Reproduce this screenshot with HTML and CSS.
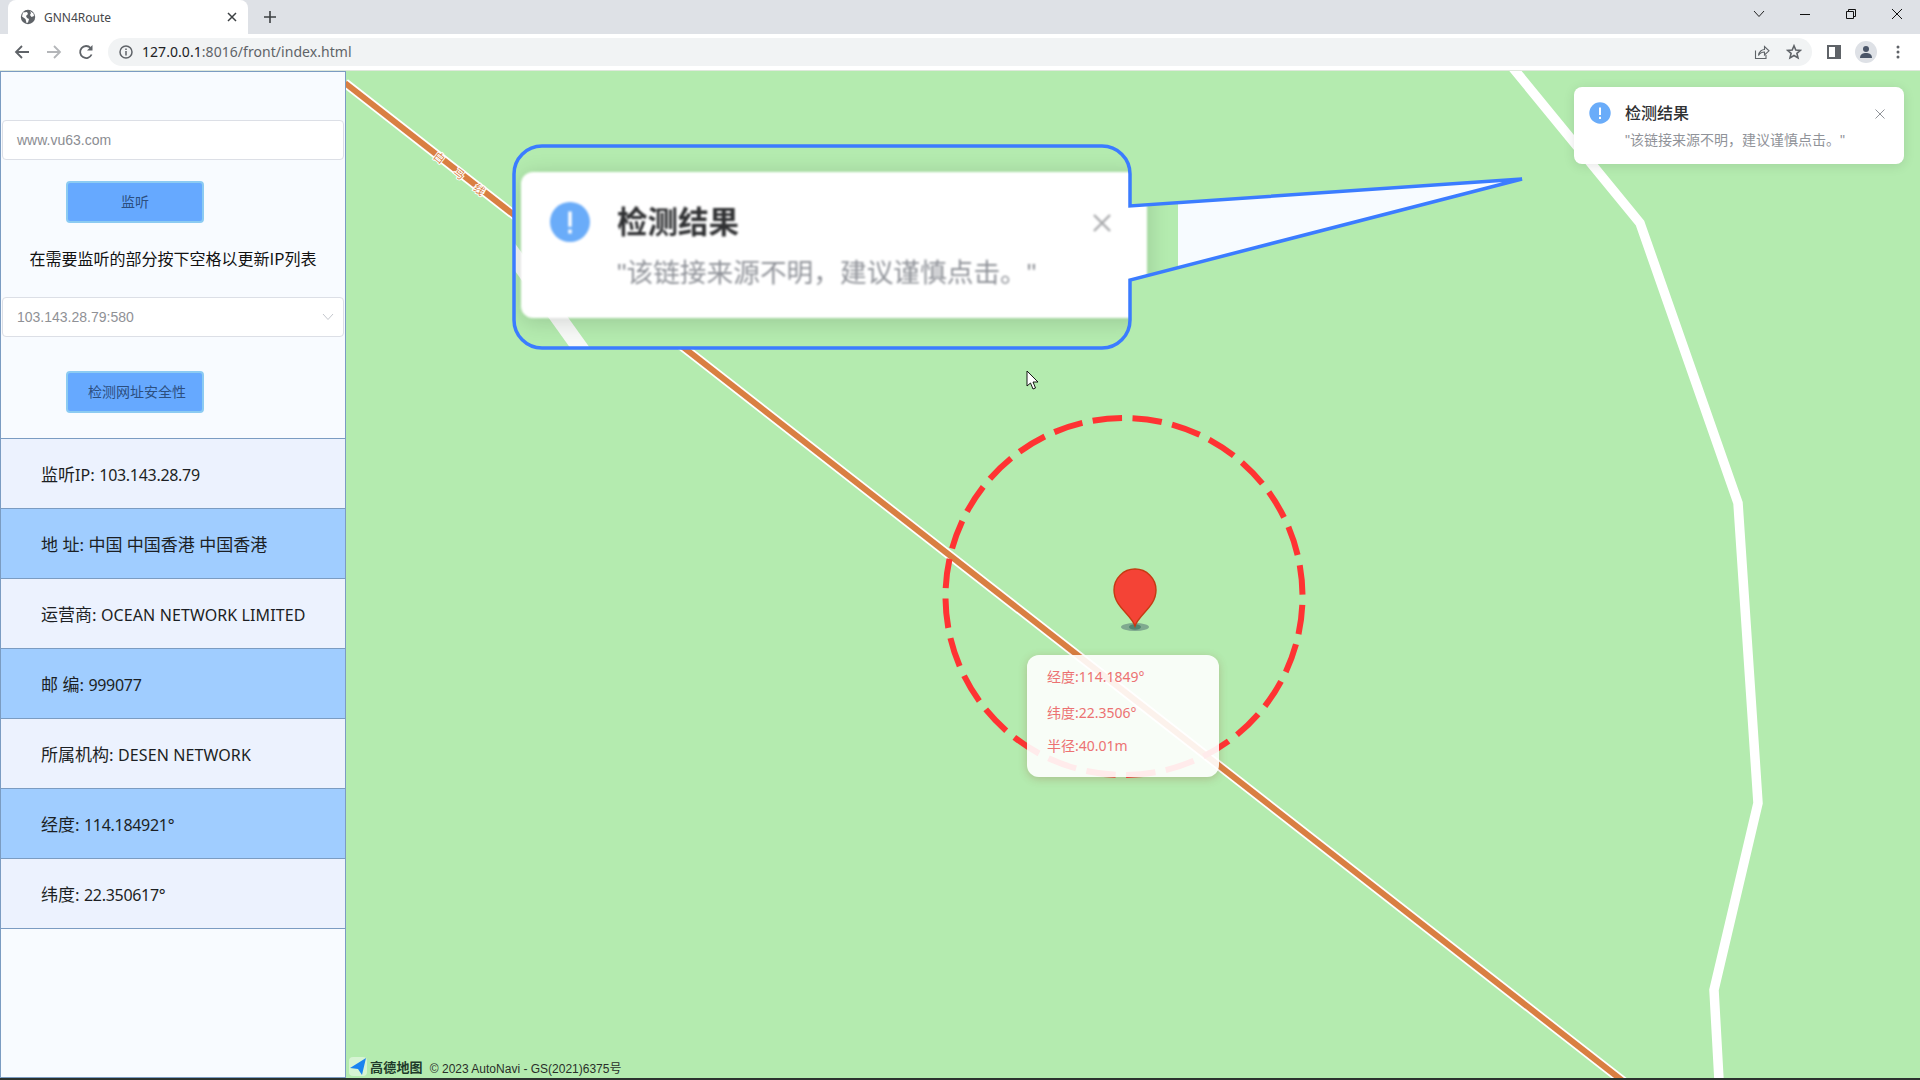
FILE: index.html
```html
<!DOCTYPE html>
<html lang="zh-CN">
<head>
<meta charset="utf-8">
<title>GNN4Route</title>
<link rel="stylesheet" href="styles.css">
</head>
<body>
<header class="chrome">
  <div class="tabstrip">
    <div class="tab">
      <svg class="tab-icon" viewBox="0 0 16 16" width="16" height="16"><circle cx="8" cy="8" r="7.2" fill="#5f6368"/><path d="M3 3.5 L7 3 L8 5 L6 7 L7 9 L9 10 L8 13.5 L6.5 14 L5.5 10 L2 7.5Z M10 2 L13.5 4.5 L14 7 L11.5 8 L10 6 L11 4Z" fill="#fff"/></svg>
      <span class="tab-title">GNN4Route</span>
      <svg class="tab-close" viewBox="0 0 10 10" width="10" height="10"><path d="M1 1 L9 9 M9 1 L1 9" stroke="#3c4043" stroke-width="1.5" fill="none"/></svg>
    </div>
    <svg class="new-tab" viewBox="0 0 12 12" width="12" height="12"><path d="M6 0 V12 M0 6 H12" stroke="#3c4043" stroke-width="1.6" fill="none"/></svg>
    <div class="window-controls">
      <svg viewBox="0 0 12 8" width="12" height="8"><path d="M1 1 L6 6.5 L11 1" stroke="#222" fill="none"/></svg>
      <svg viewBox="0 0 12 12" width="12" height="12"><path d="M1 6.5 H11" stroke="#111" fill="none"/></svg>
      <svg viewBox="0 0 12 12" width="12" height="12"><path d="M1.5 3.5 H8.5 V10.5 H1.5Z M3.5 3.5 V1.5 H10.5 V8.5 H8.5" stroke="#111" fill="none"/></svg>
      <svg viewBox="0 0 12 12" width="12" height="12"><path d="M1 1 L11 11 M11 1 L1 11" stroke="#111" fill="none"/></svg>
    </div>
  </div>
  <div class="toolbar">
    <div class="nav-icons">
      <svg viewBox="0 0 16 16" width="16" height="16"><path d="M15 8 H2 M8 2 L2 8 L8 14" stroke="#5f6368" stroke-width="1.8" fill="none"/></svg>
      <svg viewBox="0 0 16 16" width="16" height="16"><path d="M1 8 H14 M8 2 L14 8 L8 14" stroke="#b4b6b9" stroke-width="1.8" fill="none"/></svg>
      <svg viewBox="0 0 16 16" width="16" height="16"><path d="M13.6 10.5 A6 6 0 1 1 12.6 4" stroke="#5f6368" stroke-width="1.8" fill="none"/><path d="M14.5 1 V6.5 H9Z" fill="#5f6368"/></svg>
    </div>
    <div class="omnibox">
      <svg viewBox="0 0 14 14" width="14" height="14"><circle cx="7" cy="7" r="6" stroke="#5f6368" stroke-width="1.5" fill="none"/><path d="M7 6 V10.5 M7 3.4 V5" stroke="#5f6368" stroke-width="1.5" fill="none"/></svg>
      <span class="url"><span class="url-host">127.0.0.1</span>:8016/front/index.html</span>
      <span class="omni-spacer"></span>
      <svg class="omni-share" viewBox="0 0 16 16" width="16" height="16"><path d="M1.5 6.5 V14.5 H12 V11 M4.5 11.5 C5 7.5 8 5.5 10.5 5.5 V2.5 L15 6.8 L10.5 11 V8 C8 8 6 9 4.5 11.5Z" stroke="#5f6368" stroke-width="1.1" fill="none"/></svg>
      <svg class="omni-star" viewBox="0 0 16 16" width="16" height="16"><path d="M8 1.8 L9.8 6 L14.4 6.4 L10.9 9.4 L12 13.9 L8 11.5 L4 13.9 L5.1 9.4 L1.6 6.4 L6.2 6Z" stroke="#5f6368" stroke-width="1.6" fill="none"/></svg>
    </div>
    <div class="tool-icons">
      <svg viewBox="0 0 14 14" width="14" height="14"><path d="M0 0 H14 V14 H0Z M2 2 V12 H8 V2Z" fill="#5f6368" fill-rule="evenodd"/></svg>
      <div class="avatar"><svg viewBox="0 0 14 14" width="14" height="14"><circle cx="7" cy="4" r="3" fill="#4a5568"/><path d="M1 13 C1 9 4 8 7 8 C10 8 13 9 13 13Z" fill="#4a5568"/></svg></div>
      <svg viewBox="0 0 4 14" width="4" height="14"><circle cx="2" cy="2" r="1.5" fill="#5f6368"/><circle cx="2" cy="7" r="1.5" fill="#5f6368"/><circle cx="2" cy="12" r="1.5" fill="#5f6368"/></svg>
    </div>
  </div>
</header>

<main class="page">
  <aside class="sidebar">
    <div class="field field-first">www.vu63.com</div>
    <div class="btn-row btn-row-first"><button class="btn">监听</button></div>
    <p class="hint">在需要监听的部分按下空格以更新IP列表</p>
    <div class="field field-select">
      <span>103.143.28.79:580</span>
      <svg viewBox="0 0 12 8" width="12" height="8"><path d="M1 1 L6 6.5 L11 1" stroke="#c4c7cd" fill="none"/></svg>
    </div>
    <div class="btn-row btn-row-second"><button class="btn btn-wide">检测网址安全性</button></div>
    <ul class="info">
      <li>监听<span class="latin">IP</span>: <span class="num">103.143.28.79</span></li>
      <li>地 址: 中国 中国香港 中国香港</li>
      <li>运营商: <span class="latin">OCEAN NETWORK LIMITED</span></li>
      <li>邮 编: <span class="num">999077</span></li>
      <li>所属机构: <span class="latin">DESEN NETWORK</span></li>
      <li>经度: <span class="num">114.184921°</span></li>
      <li>纬度: <span class="num">22.350617°</span></li>
    </ul>
  </aside>

  <section class="map">
    <svg class="map-canvas" viewBox="346 71 1574 1007" width="1574" height="1007">
      <polyline points="1513,68 1640,223 1738,503 1758,803 1714,990 1719,1080" class="road-white"/>
      <line x1="345" y1="83" x2="1630" y2="1086.6" class="road-casing"/>
      <line x1="345" y1="83" x2="1630" y2="1086.6" class="road-orange"/>
      <g class="road-label">
        <text transform="translate(440 157) rotate(38)">白</text>
        <text transform="translate(460 173) rotate(38)">马</text>
        <text transform="translate(480 189) rotate(38)">线</text>
      </g>
      <circle cx="1124" cy="596.5" r="178.5" class="range"/>
      <ellipse cx="1135" cy="627" rx="14" ry="4" fill="#7fa98f"/>
      <ellipse cx="1135" cy="627" rx="6" ry="2.8" fill="#4f8570"/>
      <path d="M1135 626 C1131 614 1114 607 1114 590 A21 21 0 0 1 1156 590 C1156 607 1139 614 1135 626Z" fill="#f44336" stroke="#c63a12" stroke-width="1.4"/>
      <path class="cursor" d="M1027 371 V386 L1030.5 383 L1033 389 L1035.5 388 L1033 382 L1038 382Z" fill="#fff" stroke="#000" stroke-width="0.9"/>
      <rect x="349" y="1057" width="18" height="19" rx="4" fill="#fff" fill-opacity="0.45"/>
      <path d="M350 1068 L366 1058 L362 1075 L358 1069Z" fill="#1a84f0"/>
    </svg>

    <div class="popup">
      <p class="popup-line">经度:114.1849°</p>
      <p class="popup-line popup-second">纬度:22.3506°</p>
      <p class="popup-line popup-third">半径:40.01m</p>
    </div>

    <div class="lens-wrap">
      <div class="lens">
        <div class="lens-far"></div>
        <svg class="lens-road" viewBox="0 0 1009 202" width="1009" height="202"><line x1="-6" y1="100" x2="80" y2="220" stroke="#f7f9f7" stroke-width="16"/></svg>
        <div class="lens-card">
          <svg class="lens-icon" viewBox="0 0 42 42" width="40" height="40"><circle cx="21" cy="21" r="21" fill="#6aacf9"/><path d="M21 10 V26 M21 29 V33" stroke="#fff" stroke-width="3.6" fill="none"/></svg>
          <div class="lens-title">检测结果</div>
          <div class="lens-msg">"该链接来源不明，建议谨慎点击。"</div>
          <svg class="lens-close" viewBox="0 0 20 20" width="20" height="20"><path d="M2 2 L18 18 M18 2 L2 18" stroke="#a9aaad" stroke-width="2.4" fill="none"/></svg>
        </div>
      </div>
      <svg class="lens-outline" viewBox="0 0 1009 202" width="1009" height="202"><path d="M617 60 V28 A28 28 0 0 0 589 0 H29 A28 28 0 0 0 1 28 V174 A28 28 0 0 0 29 202 H589 A28 28 0 0 0 617 174 V134 L1009 33Z"/></svg>
    </div>

    <div class="notification">
      <svg class="note-icon" viewBox="0 0 22 22" width="22" height="22"><circle cx="11" cy="11" r="10.7" fill="#6aacf9"/><path d="M11 5.5 V13 M11 14.8 V17" stroke="#fff" stroke-width="2" fill="none"/></svg>
      <div class="note-title">检测结果</div>
      <div class="note-msg">"该链接来源不明，建议谨慎点击。"</div>
      <svg class="note-close" viewBox="0 0 10 10" width="10" height="10"><path d="M0.5 0.5 L9.5 9.5 M9.5 0.5 L0.5 9.5" stroke="#909399" stroke-width="1" fill="none"/></svg>
    </div>

    <div class="attribution"><span class="amap-name">高德地图</span><span class="amap-copy">© 2023 AutoNavi - GS(2021)6375号</span></div>
  </section>
</main>
<div class="taskbar"></div>
</body>
</html>
```
FILE: styles.css
```css
* { box-sizing: border-box; }
html, body { margin: 0; padding: 0; height: 100%; overflow: hidden; }
body {
  display: flex;
  flex-direction: column;
  width: 1920px;
  height: 1080px;
  font-family: "Noto Sans", "Noto Sans CJK SC", sans-serif;
  background: #fff;
}

/* browser chrome */
.chrome { flex: 0 0 70px; display: flex; flex-direction: column; }
.tabstrip { flex: 0 0 34px; background: #dee1e6; display: flex; align-items: center; padding-left: 8px; }
.tab {
  width: 240px;
  height: 34px;
  background: #fff;
  border-radius: 8px 8px 0 0;
  display: flex;
  align-items: center;
  padding: 0 11px 0 12px;
}
.tab-title { margin-left: 8px; font-size: 12px; color: #45474a; flex: 1; }
.new-tab { margin-left: 16px; }
.window-controls { margin-left: auto; display: flex; align-items: center; gap: 34px; padding: 0 17px 6px 0; }
.toolbar { flex: 1; background: #fff; display: flex; align-items: center; }
.nav-icons { display: flex; width: 108px; gap: 16px; padding-left: 14px; align-items: center; }
.omnibox {
  width: 1704px;
  height: 28px;
  background: #f1f3f4;
  border-radius: 14px;
  display: flex;
  align-items: center;
  padding: 0 10px 0 11px;
}
.url { margin: -2px 0 0 9px; font-size: 14px; color: #5f6368; font-family: "Noto Sans", sans-serif; letter-spacing: 0.05px; }
.url-host { color: #202124; }
.omni-spacer { flex: 1; }
.omni-star { margin-left: 16px; }
.tool-icons { flex: 1; display: flex; align-items: center; padding-left: 15px; }
.avatar {
  width: 22px;
  height: 22px;
  border-radius: 50%;
  background: #dee1e6;
  display: flex;
  align-items: center;
  justify-content: center;
  margin-left: 14px;
  margin-right: 19px;
}

/* page */
.page { flex: 1; display: flex; min-height: 0; border-top: 1px solid #dfe8dc; }
.sidebar {
  flex: 0 0 346px;
  background: #f8fbff;
  border: 1px solid #7b9cc2;
  padding: 48px 1px 0;
  display: flex;
  flex-direction: column;
}
.field {
  height: 40px;
  background: #fff;
  border: 1px solid #dcdfe6;
  border-radius: 4px;
  padding: 0 14px;
  display: flex;
  align-items: center;
  font-family: "Liberation Sans", sans-serif;
  font-size: 14px;
  color: #8b8d92;
  flex: none;
}
.field-select { justify-content: space-between; padding-right: 9px; color: #8f9196; margin-top: 27px; }
.btn-row { padding-left: 64px; flex: none; }
.btn-row-first { margin-top: 21px; }
.btn-row-second { margin-top: 34px; }
.btn {
  width: 138px;
  height: 42px;
  background: #66a9ff;
  border: 2px solid #8ccbf2;
  border-radius: 4px;
  font-family: "Noto Sans CJK SC", sans-serif;
  font-size: 14px;
  color: #2c4f7f;
  padding: 0 0 2px;
}
.btn-wide { padding-left: 4px; }
.hint { margin: 23px 0 0; height: 24px; line-height: 24px; font-size: 16px; text-align: center; color: #111; font-family: "Noto Sans CJK SC", sans-serif; flex: none; }
.info { list-style: none; margin: 25px -1px 0; padding: 0; border-top: 1px solid #7b9cc2; }
.info li {
  height: 70px;
  border-bottom: 1px solid #7b9cc2;
  background: #ecf2fe;
  padding-left: 40px;
  line-height: 71px;
  font-size: 17px;
  white-space: nowrap;
  color: #1c1f24;
}
.info li:nth-child(even) { background: #a0cdff; }
.num { font-size: 16px; letter-spacing: -0.3px; }
.latin { font-size: 16px; letter-spacing: 0.1px; }

/* map */
.map { flex: 1; position: relative; background: #b4ebaf; overflow: hidden; }
.map-canvas { position: absolute; inset: 0; display: block; }
.road-white { fill: none; stroke: #fff; stroke-width: 9.5; stroke-linejoin: miter; }
.road-casing { stroke: #fff; stroke-width: 9.5; }
.road-orange { stroke: #d97f42; stroke-width: 6; }
.road-label text { font-family: "Noto Sans CJK SC", sans-serif; font-size: 11px; text-anchor: middle; dominant-baseline: central; fill: #d97f42; stroke: #fff; stroke-width: 2; paint-order: stroke; }
.range { fill: none; stroke: #ff3333; stroke-width: 6; stroke-dasharray: 29.5 10.55; stroke-dashoffset: -8.35; }

.popup {
  position: absolute;
  left: 681px;
  top: 584px;
  width: 192px;
  height: 122px;
  background: rgba(255, 255, 255, 0.9);
  border-radius: 12px;
  box-shadow: 0 2px 8px rgba(150, 90, 60, 0.3);
  padding: 11px 0 0 20px;
  color: #ec7272;
  font-size: 14px;
  font-family: "Noto Sans", "Noto Sans CJK SC", sans-serif;
}
.popup-line { margin: 0; height: 22px; line-height: 22px; }
.popup-second { margin-top: 14px; }
.popup-third { margin-top: 11px; }

.lens-wrap { position: absolute; left: 167px; top: 75px; width: 1009px; height: 202px; }
.lens {
  position: absolute;
  inset: 0;
  background: #b4ebaf;
  clip-path: path("M617 60 V28 A28 28 0 0 0 589 0 H29 A28 28 0 0 0 1 28 V174 A28 28 0 0 0 29 202 H589 A28 28 0 0 0 617 174 V134 L1009 33Z");
}
.lens-far { position: absolute; left: 665px; top: 0; right: 0; bottom: 0; background: #f7fbff; }
.lens-road { position: absolute; left: 0; top: 0; }
.lens-card {
  position: absolute;
  left: 8px;
  top: 26px;
  width: 626px;
  height: 146px;
  background: #fff;
  border-radius: 12px;
  box-shadow: 0 3px 22px rgba(0, 0, 0, 0.16);
  filter: blur(0.8px);
}
.lens-icon { position: absolute; left: 29px; top: 30px; }
.lens-title { position: absolute; left: 96px; top: 28px; font-family: "Noto Sans CJK SC", sans-serif; font-size: 30.5px; line-height: 40px; font-weight: 700; color: #303133; }
.lens-msg { position: absolute; left: 96px; top: 83px; font-family: "Liberation Sans", "Noto Sans CJK SC", sans-serif; font-size: 26.7px; line-height: 36px; color: #909399; white-space: nowrap; }
.lens-close { position: absolute; left: 571px; top: 41px; }
.lens-outline { position: absolute; inset: 0; overflow: visible; }
.lens-outline path { fill: none; stroke: #3b7cff; stroke-width: 3.5; stroke-linejoin: miter; }

.notification {
  position: absolute;
  left: 1228px;
  top: 16px;
  width: 330px;
  height: 77px;
  background: #fff;
  border-radius: 8px;
  box-shadow: 0 2px 12px rgba(0, 0, 0, 0.1);
}
.note-icon { position: absolute; left: 15px; top: 15px; }
.note-title { position: absolute; left: 51px; top: 13px; font-family: "Noto Sans CJK SC", sans-serif; font-size: 16px; line-height: 24px; font-weight: 500; color: #303133; }
.note-msg { position: absolute; left: 51px; top: 43px; font-family: "Liberation Sans", "Noto Sans CJK SC", sans-serif; font-size: 14px; line-height: 20px; color: #909399; white-space: nowrap; }
.note-close { position: absolute; right: 19px; top: 22px; }

.attribution { position: absolute; left: 24px; bottom: 2px; display: flex; align-items: center; height: 18px; }
.amap-name { font-family: "Noto Sans CJK SC", sans-serif; font-size: 13px; font-weight: 700; color: #1e3a2a; letter-spacing: 0.2px; margin-top: -2px; }
.amap-copy { margin-left: 7px; font-family: "Liberation Sans", "Noto Sans CJK SC", sans-serif; font-size: 12px; color: #2a2f2a; }

.taskbar { flex: 0 0 2px; background: #2b322e; }
```
